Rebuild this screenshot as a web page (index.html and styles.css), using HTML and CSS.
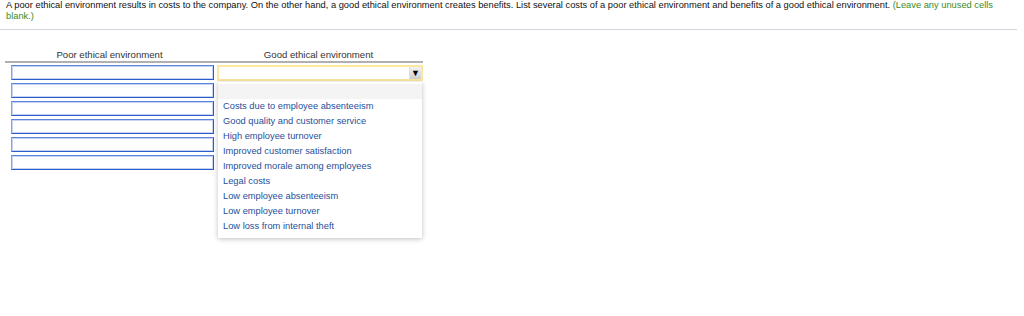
FILE: index.html
```html
<!DOCTYPE html>
<html lang="en">
<head>
    <meta charset="UTF-8">
    <title>Ethical environment</title>
    <link rel="stylesheet" href="styles.css">
</head>
<body>
    <div class="question">
        A poor ethical environment results in costs to the company. On the other hand, a good ethical environment creates benefits. List several costs of a poor ethical environment and benefits of a good ethical environment. <span class="hint">(Leave any unused cells</span> <span class="hint">blank.)</span>
    </div>

    <div class="answers">
        <div class="heads">
            <div>Poor ethical environment</div>
            <div>Good ethical environment</div>
        </div>
        <div class="rows">
            <div class="row">
                <div class="cell"></div>
                <div class="select">
                    <span class="arrow">&#9660;</span>
                    <ul class="menu">
                        <li class="empty"></li>
                        <li>Costs due to employee absenteeism</li>
                        <li>Good quality and customer service</li>
                        <li>High employee turnover</li>
                        <li>Improved customer satisfaction</li>
                        <li>Improved morale among employees</li>
                        <li>Legal costs</li>
                        <li>Low employee absenteeism</li>
                        <li>Low employee turnover</li>
                        <li>Low loss from internal theft</li>
                    </ul>
                </div>
            </div>
            <div class="row"><div class="cell"></div></div>
            <div class="row"><div class="cell"></div></div>
            <div class="row"><div class="cell"></div></div>
            <div class="row"><div class="cell"></div></div>
            <div class="row"><div class="cell"></div></div>
        </div>
    </div>
</body>
</html>
```

FILE: styles.css
```css
* {
    margin: 0;
    padding: 0;
    box-sizing: border-box;
}

body {
    font-family: 'Liberation Sans', Arial, sans-serif;
    font-size: 9.3px;
    color: #111;
    background: #fff;
    min-height: 316px;
}

.question {
    width: 1017px;
    padding: 0 6px 3px 6px;
    line-height: 11px;
    border-bottom: 1px solid #d4d4dc;
    height: 30px;
}

.hint {
    color: #3b8a24;
}

.answers {
    margin: 19px 0 0 5px;
    width: 418px;
    padding-bottom: 80px;
}

.heads {
    display: grid;
    grid-template-columns: 209px 209px;
    color: #333;
    font-size: 9.6px;
    text-align: center;
    line-height: 11px;
    padding-bottom: 1px;
    border-bottom: 2px solid #b0b0b0;
}

.rows {
    padding: 2px 0 0 6px;
    display: flex;
    flex-direction: column;
    gap: 3px;
}

.row {
    display: grid;
    grid-template-columns: 203px 206px;
    gap: 3px;
    height: 15px;
}

.cell {
    height: 15px;
    border: 1px solid #2b5ccc;
    border-top-color: #5b82dc;
    border-left-color: #86a2e6;
    box-shadow: inset 0 0 0 1px rgba(70, 110, 215, 0.3);
    background: #fff;
}

.select {
    position: relative;
    height: 16px;
    border: 2px solid #fbe7a0;
    background: #fff;
}

.arrow {
    position: absolute;
    right: 0;
    top: 0;
    width: 12px;
    height: 12px;
    font-size: 9px;
    line-height: 12px;
    text-align: center;
    color: #000;
    background: linear-gradient(#f2f2f2, #cfcfcf);
    border-left: 1px solid #e0e0e0;
}

.menu {
    list-style: none;
    position: absolute;
    top: 15px;
    left: -1px;
    width: 204px;
    padding: 2px 0 4px 0;
    background: #fff;
    box-shadow: 0 1px 5px rgba(0, 0, 0, 0.25);
    z-index: 2;
}

.menu li {
    height: 15px;
    line-height: 15px;
    padding-left: 5px;
    color: #1f4f9a;
    white-space: nowrap;
}

.menu .empty {
    background: #f4f4f4;
}
```
